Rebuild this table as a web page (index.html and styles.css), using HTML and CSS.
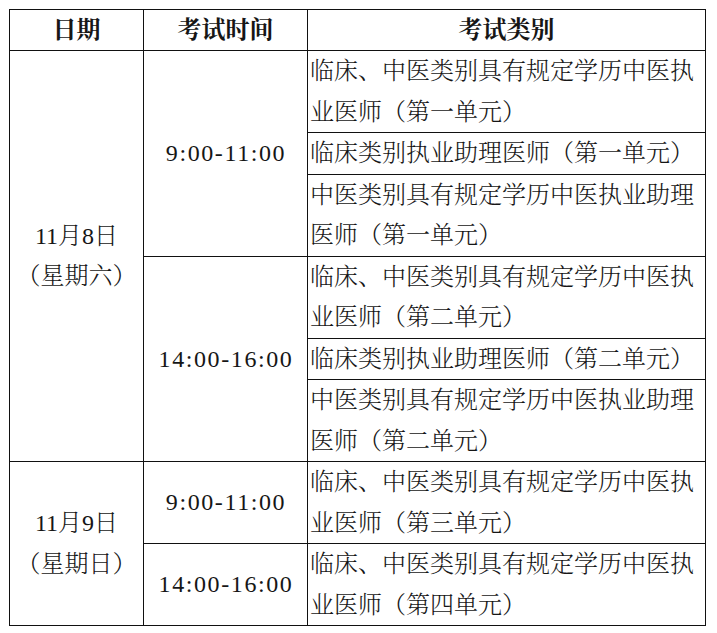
FILE: index.html
```html
<!DOCTYPE html>
<html lang="zh-CN">
<head>
<meta charset="utf-8">
<title>考试时间安排</title>
<link rel="stylesheet" href="styles.css">
</head>
<body>
<div class="wrap">
<table class="schedule">
  <colgroup>
    <col class="c-date">
    <col class="c-time">
    <col class="c-type">
  </colgroup>
  <thead>
    <tr><th>日期</th><th>考试时间</th><th>考试类别</th></tr>
  </thead>
  <tbody>
    <tr>
      <td class="center" rowspan="6">11月8日<br>（星期六）</td>
      <td class="center time" rowspan="3">9:00-11:00</td>
      <td class="two">临床、中医类别具有规定学历中医执业医师（第一单元）</td>
    </tr>
    <tr><td class="one">临床类别执业助理医师（第一单元）</td></tr>
    <tr><td class="two">中医类别具有规定学历中医执业助理医师（第一单元）</td></tr>
    <tr>
      <td class="center time" rowspan="3">14:00-16:00</td>
      <td class="two">临床、中医类别具有规定学历中医执业医师（第二单元）</td>
    </tr>
    <tr><td class="one">临床类别执业助理医师（第二单元）</td></tr>
    <tr><td class="two">中医类别具有规定学历中医执业助理医师（第二单元）</td></tr>
    <tr>
      <td class="center" rowspan="2">11月9日<br>（星期日）</td>
      <td class="center time">9:00-11:00</td>
      <td class="two">临床、中医类别具有规定学历中医执业医师（第三单元）</td>
    </tr>
    <tr>
      <td class="center time">14:00-16:00</td>
      <td class="two">临床、中医类别具有规定学历中医执业医师（第四单元）</td>
    </tr>
  </tbody>
</table>
</div>
</body>
</html>
```
FILE: styles.css
```css
html, body {
  margin: 0;
  padding: 0;
  background: #ffffff;
}

.wrap {
  padding: 9px 0 0 9px;
}

.schedule {
  border-collapse: collapse;
  table-layout: fixed;
  width: 697px;
  font-family: "Liberation Serif", "Noto Serif CJK SC", "Noto Sans CJK SC", serif;
  font-size: 24px;
  color: #161616;
}

.c-date { width: 134px; }
.c-time { width: 164px; }
.c-type { width: 398px; }

.schedule th,
.schedule td {
  border: 1px solid #111111;
  padding: 0;
  line-height: 40.5px;
  vertical-align: middle;
}

.schedule th {
  font-weight: 700;
  text-align: center;
  line-height: 40px;
}

.schedule td {
  font-weight: 300;
}

.schedule td.center {
  text-align: center;
}

.schedule td.time {
  letter-spacing: 1.6px;
  padding-left: 1px;
}

.schedule td.one,
.schedule td.two {
  text-align: left;
  padding-left: 2px;
  word-break: break-all;
}
```
